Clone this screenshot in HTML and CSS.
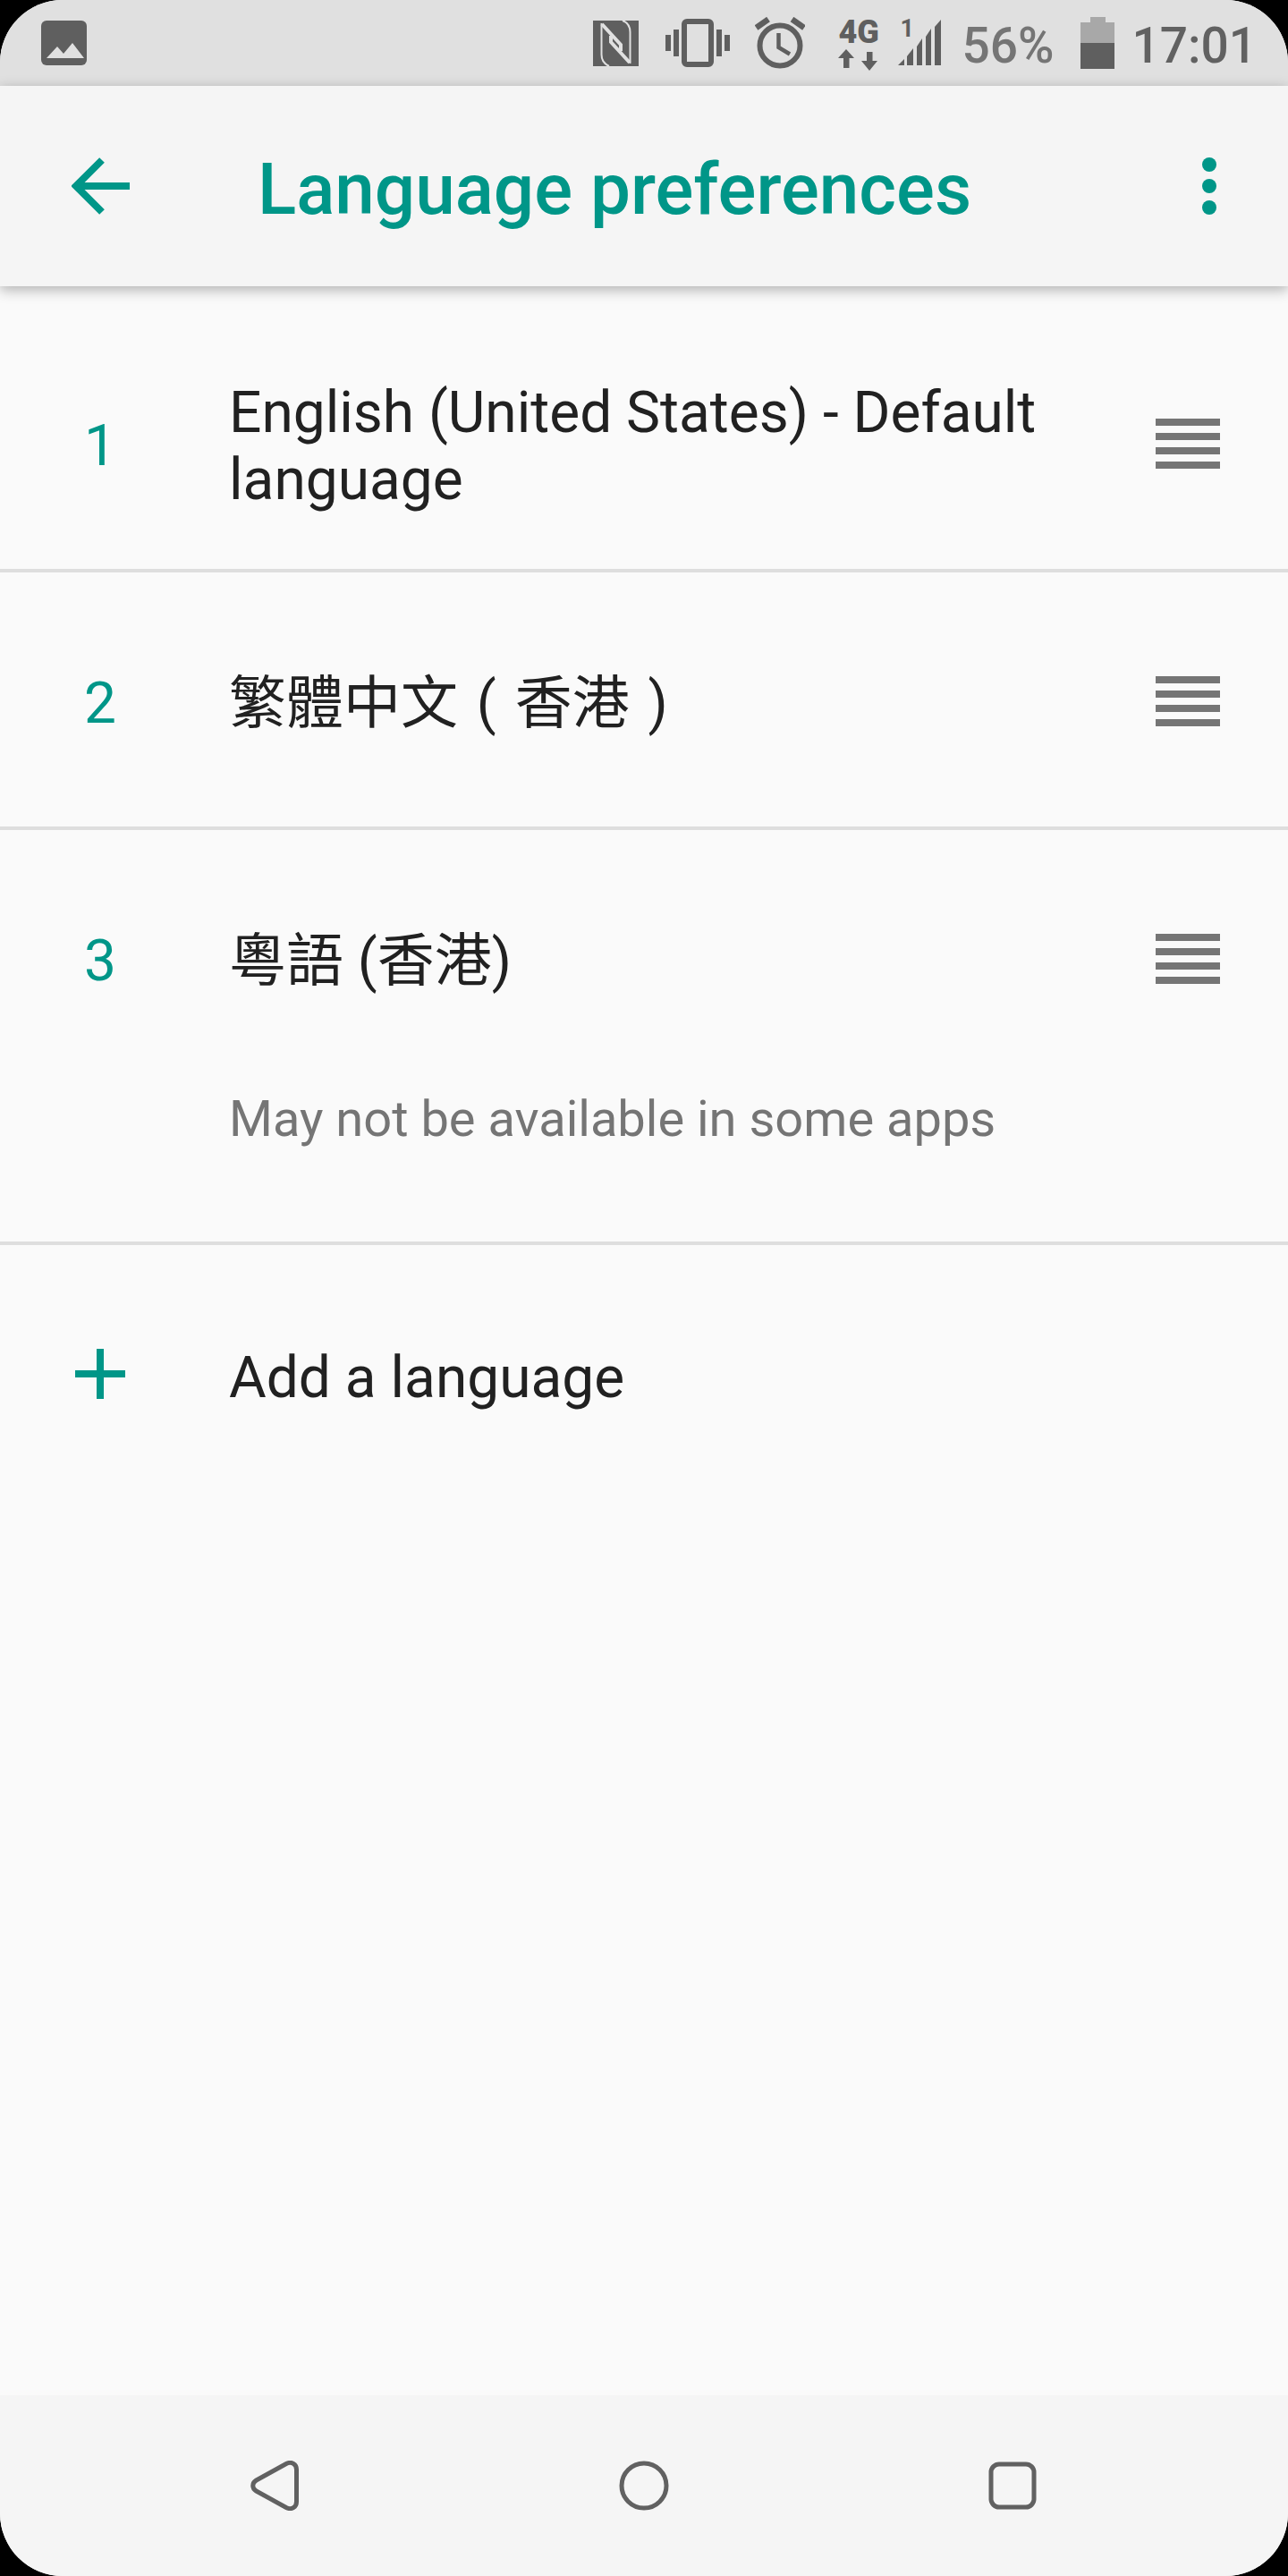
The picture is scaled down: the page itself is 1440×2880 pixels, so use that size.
FILE: index.html
```html
<!DOCTYPE html>
<html lang="en">
<head>
    <meta charset="UTF-8">
    <title>Language preferences</title>
    <link rel="stylesheet" href="styles.css">
</head>
<body>
<div class="screen">
    <div class="status-bar">
        <svg class="ic-image" width="51" height="50" viewBox="0 0 51 50">
            <rect width="51" height="50" rx="6" fill="#5f5f5f"/>
            <path d="M6 42 L18 29 L25 37 L35 25 L48 42 Z" fill="#e0e0e0"/>
        </svg>
        <div class="status-right">
            <svg class="ic-nfc" width="51" height="51" viewBox="0 0 51 51">
                <rect width="51" height="51" fill="#5f5f5f"/>
                <g fill="none" stroke="#e0e0e0">
                    <path d="M9.5 3 V38 Q9.5 47 18 51" stroke-width="2"/>
                    <path d="M33 0 Q41.5 3 41.5 13 V48" stroke-width="2"/>
                    <path d="M10 4 L31 27 V34" stroke-width="4"/>
                    <path d="M41 47 L20 24 V17" stroke-width="4"/>
                </g>
            </svg>
            <svg class="ic-vibrate" width="72" height="54" viewBox="0 0 72 54">
                <rect x="21" y="3" width="30" height="48" rx="3" fill="none" stroke="#5f5f5f" stroke-width="6"/>
                <g fill="#5f5f5f">
                    <rect x="0" y="18" width="6" height="18"/>
                    <rect x="9" y="12" width="6" height="30"/>
                    <rect x="57" y="12" width="6" height="30"/>
                    <rect x="66" y="18" width="6" height="18"/>
                </g>
            </svg>
            <svg class="ic-alarm" width="56" height="58" viewBox="0 0 56 58">
                <g fill="none" stroke="#5f5f5f">
                    <circle cx="28" cy="32" r="22.5" stroke-width="6"/>
                    <path d="M26.5 18 V34 L39 41.5" stroke-width="4.5"/>
                    <path d="M1.5 12 L15 2.5" stroke-width="6.5"/>
                    <path d="M41.5 2.5 L55 12" stroke-width="6.5"/>
                </g>
            </svg>
            <div class="net">
                <span class="net-label">4G</span>
                <svg width="44" height="25" viewBox="0 0 44 25">
                    <path d="M0 11 L9 1 L18 11 H12.5 V22 H6 V11 Z" fill="#5f5f5f"/>
                    <path d="M26 14 L35 25 L44 14 H38.5 V4 H32 V14 Z" fill="#5f5f5f"/>
                </svg>
            </div>
            <div class="signal">
                <span class="sim-num">1</span>
                <svg width="49" height="52" viewBox="0 0 49 52">
                    <path d="M1 51 L8 44 V51 Z" fill="#5f5f5f"/>
                    <path d="M11 51 V41 L18 32 V51 Z" fill="#5f5f5f"/>
                    <path d="M22 51 V30 L28 21 V51 Z" fill="#5f5f5f"/>
                    <path d="M32 51 V19 L38 10 V51 Z" fill="#5f5f5f"/>
                    <path d="M42 51 V8 L49 0 V51 Z" fill="#5f5f5f"/>
                </svg>
            </div>
            <span class="battery-pct">56%</span>
            <div class="battery">
                <div class="battery-nub"></div>
                <div class="battery-empty"></div>
                <div class="battery-full"></div>
            </div>
            <span class="clock">17:01</span>
        </div>
    </div>

    <div class="app-bar">
        <svg class="ic-back" width="65" height="64" viewBox="0 0 65 64">
            <path d="M65 32 H5" fill="none" stroke="#009688" stroke-width="8"/>
            <path d="M34 3 L5 32 L34 61" fill="none" stroke="#009688" stroke-width="8"/>
        </svg>
        <h1 class="title">Language preferences</h1>
        <div class="more">
            <span></span>
            <span></span>
            <span></span>
        </div>
    </div>

    <div class="list">
        <div class="row">
            <div class="row-main">
                <div class="num">1</div>
                <div class="name">English (United States) - Default language</div>
                <div class="handle"><span></span><span></span><span></span><span></span></div>
            </div>
        </div>
        <div class="row">
            <div class="row-main">
                <div class="num">2</div>
                <div class="name name-spaced" lang="zh-Hant">繁體中文 ( 香港 )</div>
                <div class="handle"><span></span><span></span><span></span><span></span></div>
            </div>
        </div>
        <div class="row">
            <div class="row-main">
                <div class="num">3</div>
                <div class="name" lang="zh-Hant">粵語 (香港)</div>
                <div class="handle"><span></span><span></span><span></span><span></span></div>
            </div>
            <div class="hint">May not be available in some apps</div>
        </div>
        <div class="add-row">
            <div class="add-icon">
                <svg width="56" height="56" viewBox="0 0 56 56">
                    <path d="M0 28 H56 M28 0 V56" fill="none" stroke="#009688" stroke-width="8"/>
                </svg>
            </div>
            <div class="name">Add a language</div>
        </div>
    </div>

    <div class="nav-bar">
        <svg width="56" height="56" viewBox="0 0 56 56">
            <path d="M6.5 22 L40 3.5 C46 0.5 51.5 4 51.5 10 V46 C51.5 52 46 55.5 40 52.5 L6.5 34 C1.5 31 1.5 25 6.5 22 Z" fill="none" stroke="#616161" stroke-width="5"/>
        </svg>
        <svg width="56" height="56" viewBox="0 0 56 56">
            <circle cx="28" cy="28" r="25" fill="none" stroke="#616161" stroke-width="5"/>
        </svg>
        <svg width="56" height="56" viewBox="0 0 56 56">
            <rect x="4" y="4" width="48" height="48" rx="9" fill="none" stroke="#616161" stroke-width="5"/>
        </svg>
    </div>
</div>
</body>
</html>
```

FILE: styles.css
```css
* {
    box-sizing: border-box;
}
html, body {
    margin: 0;
    padding: 0;
    background-color: #000;
}
body {
    font-family: Roboto, "Noto Sans CJK TC", sans-serif;
    color: #212121;
}
svg {
    display: block;
}
.screen {
    width: 1440px;
    height: 2880px;
    display: flex;
    flex-direction: column;
    background-color: #fafafa;
    border-radius: 70px;
    overflow: hidden;
}

/* status bar */
.status-bar {
    height: 96px;
    flex: none;
    display: flex;
    justify-content: space-between;
    align-items: flex-start;
    padding: 0 35px 0 46px;
    background-color: #e0e0e0;
}
.ic-image {
    margin-top: 23px;
}
.status-right {
    display: flex;
    align-items: flex-start;
}
.ic-nfc {
    margin-top: 23px;
}
.ic-vibrate {
    margin: 21px 0 0 30px;
}
.ic-alarm {
    margin: 19px 0 0 28px;
}
.net {
    width: 44px;
    margin: 23px 0 0 37px;
    display: flex;
    flex-direction: column;
    gap: 5px;
}
.net-label {
    height: 26px;
    font-size: 36px;
    line-height: 26px;
    font-weight: 900;
    color: #5f5f5f;
    white-space: nowrap;
}
.signal {
    position: relative;
    margin: 22px 0 0 22px;
}
.sim-num {
    position: absolute;
    left: 3px;
    top: 0;
    font-size: 27px;
    line-height: 20px;
    font-weight: 700;
    color: #5f5f5f;
}
.battery-pct {
    margin: 17px 0 0 23px;
    font-size: 55px;
    line-height: 68px;
    font-weight: 500;
    color: #757575;
}
.battery {
    width: 38px;
    margin: 19px 0 0 30px;
    display: flex;
    flex-direction: column;
    align-items: center;
}
.battery-nub {
    width: 17px;
    height: 6px;
    background-color: #a8a8a8;
}
.battery-empty {
    width: 38px;
    height: 23px;
    background-color: #a8a8a8;
}
.battery-full {
    width: 38px;
    height: 29px;
    background-color: #5f5f5f;
}
.clock {
    margin: 17px 0 0 19px;
    font-size: 55px;
    line-height: 68px;
    font-weight: 500;
    color: #616161;
}

/* app bar */
.app-bar {
    height: 224px;
    flex: none;
    display: flex;
    align-items: center;
    padding: 0 80px;
    background-color: #f5f5f5;
    box-shadow: 0 4px 14px rgba(0, 0, 0, 0.3);
    position: relative;
}
.title {
    flex: 1;
    margin: 0 0 0 143px;
    padding-top: 8px;
    font-size: 80px;
    line-height: 90px;
    font-weight: 500;
    color: #009688;
}
.more {
    display: flex;
    flex-direction: column;
    gap: 8px;
}
.more span {
    display: block;
    width: 16px;
    height: 16px;
    border-radius: 50%;
    background-color: #009688;
}

/* list */
.list {
    flex: 1;
    padding-top: 32px;
}
.row {
    border-bottom: 4px solid #dedede;
}
.row-main {
    height: 284px;
    display: flex;
    align-items: center;
    padding-right: 76px;
}
.num {
    width: 224px;
    flex: none;
    padding-top: 8px;
    text-align: center;
    font-size: 64px;
    color: #009688;
}
.name {
    flex: 1;
    margin-left: 32px;
    padding: 9px 60px 0 0;
    font-size: 64px;
    line-height: 75px;
}
.name-spaced {
    word-spacing: 5px;
}
.handle {
    flex: none;
    display: flex;
    flex-direction: column;
    gap: 8px;
    margin-top: 4px;
}
.handle span {
    display: block;
    width: 72px;
    height: 8px;
    background-color: #757575;
}
.hint {
    margin-left: 256px;
    padding: 4px 0 102px;
    font-size: 56px;
    line-height: 70px;
    color: #757575;
}
.add-row {
    height: 288px;
    display: flex;
    align-items: center;
}
.add-icon {
    width: 224px;
    flex: none;
    display: flex;
    justify-content: center;
}

/* nav bar */
.nav-bar {
    height: 202px;
    flex: none;
    display: flex;
    justify-content: space-between;
    align-items: center;
    padding: 0 280px;
    background-color: #f5f5f5;
}
```
